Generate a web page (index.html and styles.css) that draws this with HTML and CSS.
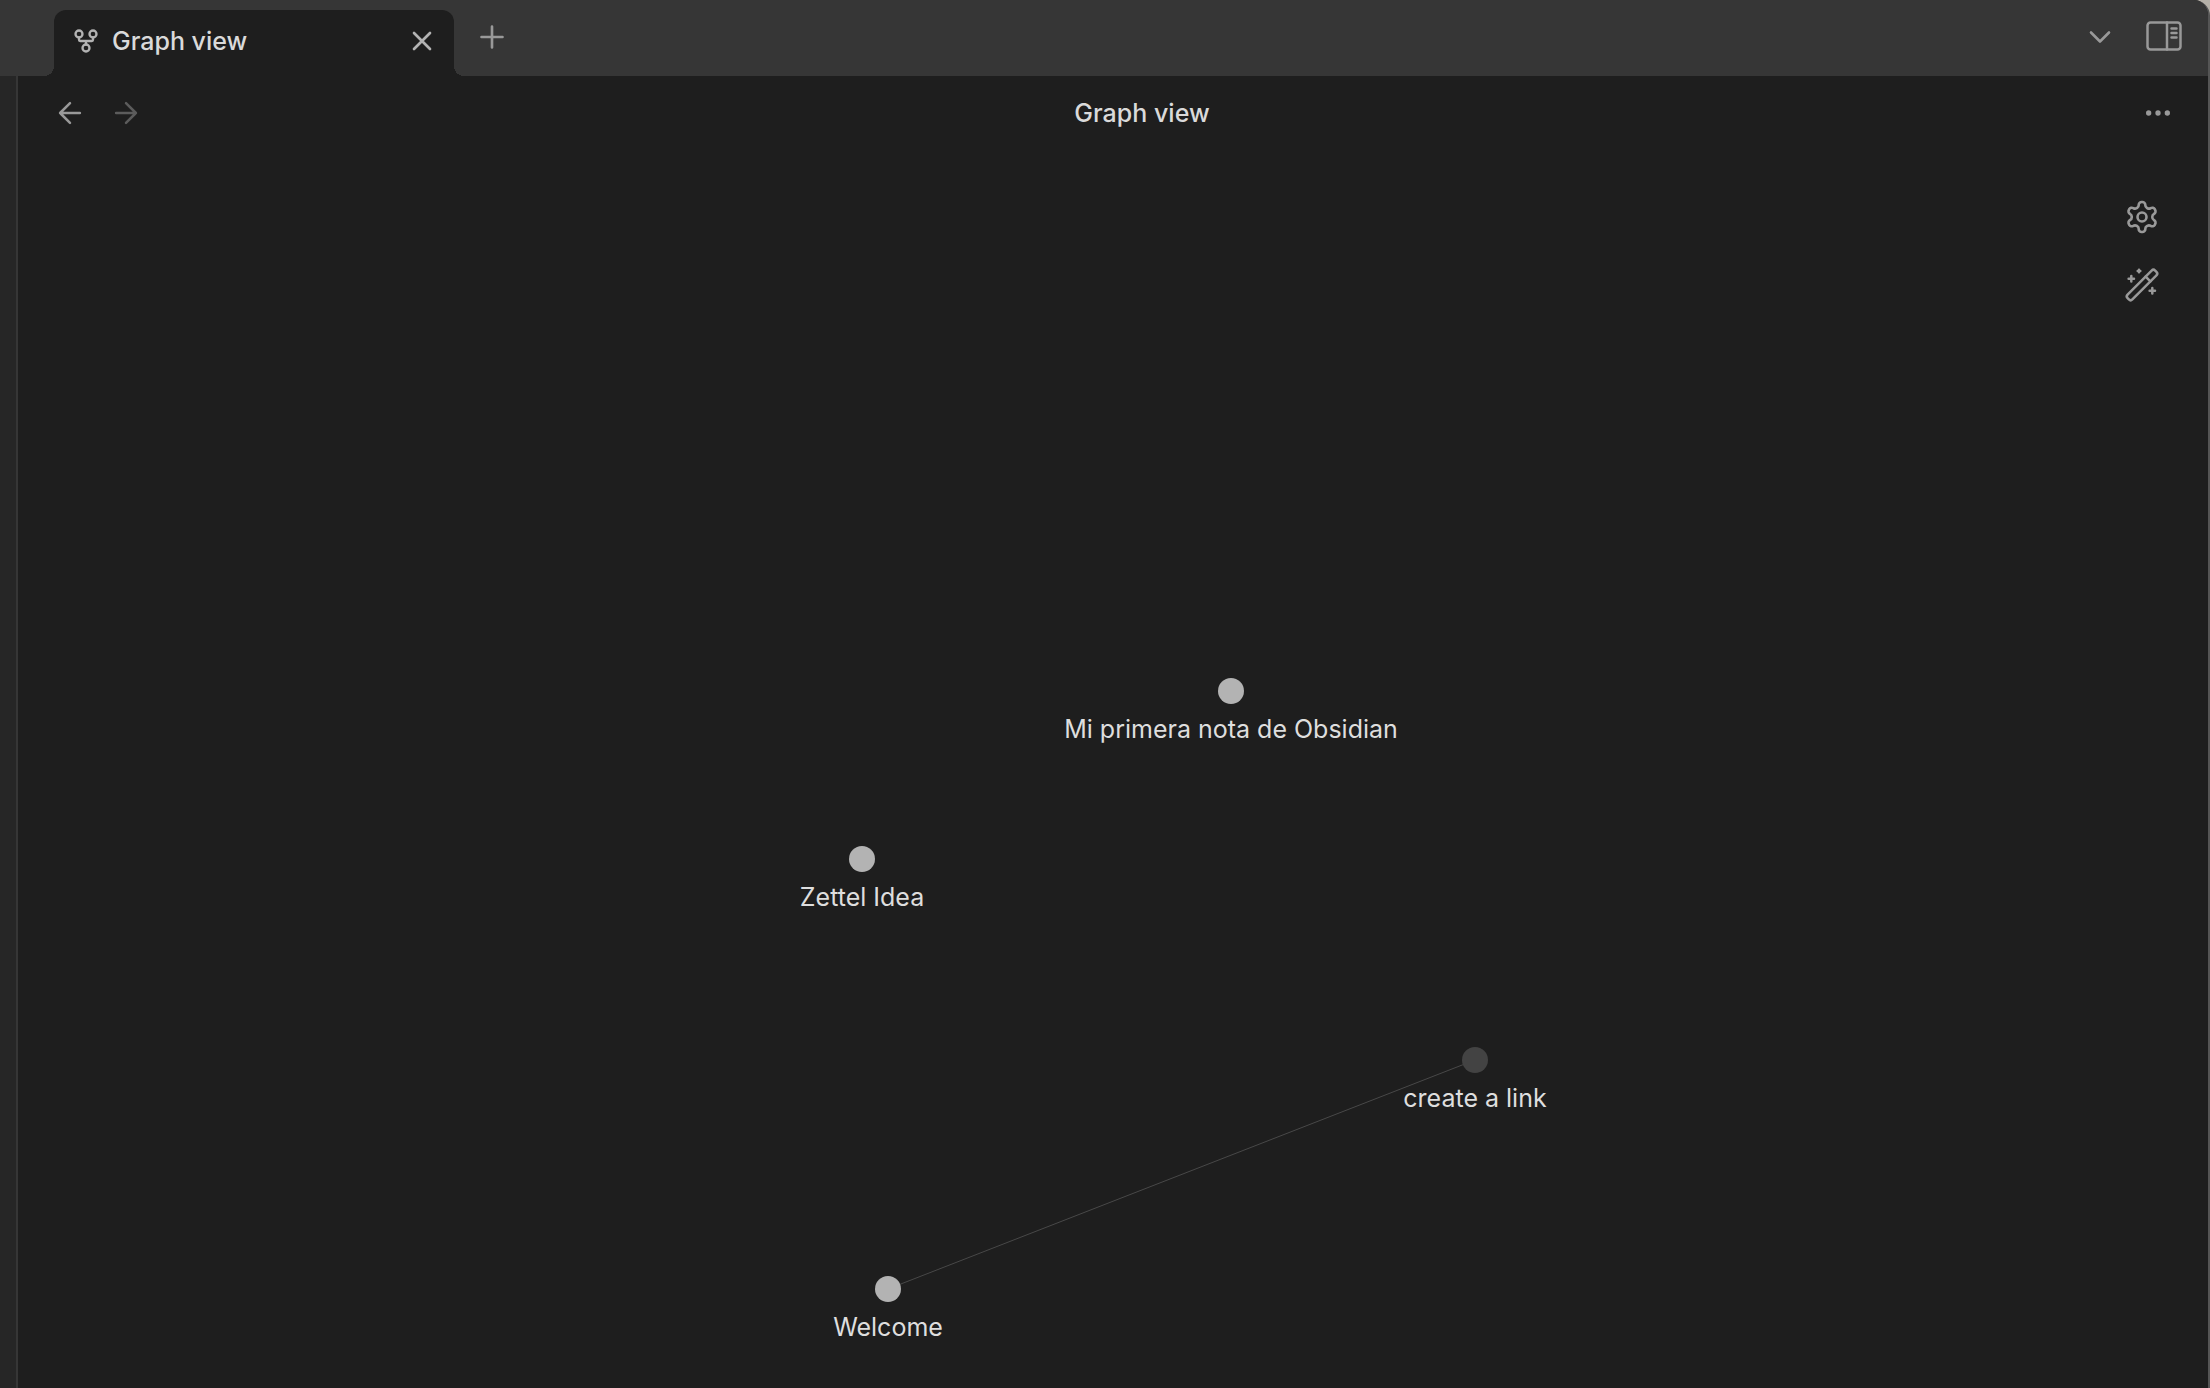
FILE: index.html
```html
<!DOCTYPE html>
<html lang="en">
<head>
<meta charset="utf-8">
<title>Graph view</title>
<link rel="stylesheet" href="styles.css">
</head>
<body>
<div class="window">
  <header class="tab-bar">
    <div class="tab">
      <svg class="tab-icon" viewBox="0 0 24 24" aria-hidden="true"><circle cx="12" cy="18" r="3"/><circle cx="6" cy="6" r="3"/><circle cx="18" cy="6" r="3"/><path d="M18 9v2c0 .6-.4 1-1 1H7c-.6 0-1-.4-1-1V9M12 12v3"/></svg>
      <span class="tab-title">Graph view</span>
      <button class="icon-button tab-close" type="button" aria-label="Close"><svg viewBox="0 0 24 24"><path d="M18 6 6 18M6 6l12 12"/></svg></button>
    </div>
    <button class="icon-button new-tab" type="button" aria-label="New tab"><svg viewBox="0 0 24 24"><path d="M5 12h14M12 5v14"/></svg></button>
    <div class="bar-actions">
      <button class="icon-button" type="button" aria-label="Tab list"><svg viewBox="0 0 24 24"><path d="m6 9 6 6 6-6"/></svg></button>
      <button class="icon-button" type="button" aria-label="Toggle right sidebar"><svg class="panel-icon" viewBox="0 0 36 32"><rect x="1.500" y="1.500" width="33" height="27" rx="3"/><path d="M21 1.500v27M25.500 7.500h5M25.500 12h5M25.500 16.500h5"/></svg></button>
    </div>
  </header>
  <div class="workspace">
    <div class="side-strip"></div>
    <main class="view">
      <div class="view-header">
        <nav class="history">
          <button class="icon-button" type="button" aria-label="Back"><svg viewBox="0 0 24 24"><path d="m12 19-7-7 7-7M19 12H5"/></svg></button>
          <button class="icon-button" type="button" aria-label="Forward" disabled><svg viewBox="0 0 24 24"><path d="M5 12h14M12 5l7 7-7 7"/></svg></button>
        </nav>
        <h1 class="view-title">Graph view</h1>
        <button class="icon-button more" type="button" aria-label="More options"><svg viewBox="0 0 24 24"><circle cx="5" cy="12" r="1"/><circle cx="12" cy="12" r="1"/><circle cx="19" cy="12" r="1"/></svg></button>
      </div>
      <div class="canvas">
        <svg class="graph" viewBox="0 0 2190 1238">
          <line class="edge" x1="870" y1="1139" x2="1457" y2="910"/>
          <g><circle class="node" cx="1213" cy="541" r="13"/><text class="label" x="1213" y="588">Mi primera nota de Obsidian</text></g>
          <g><circle class="node" cx="844" cy="709" r="13"/><text class="label" x="844" y="756">Zettel Idea</text></g>
          <g><circle class="node unresolved" cx="1457" cy="910" r="13"/><text class="label" x="1457" y="957">create a link</text></g>
          <g><circle class="node" cx="870" cy="1139" r="13"/><text class="label" x="870" y="1186">Welcome</text></g>
        </svg>
        <div class="graph-controls">
          <button class="icon-button" type="button" aria-label="Graph settings"><svg viewBox="0 0 24 24"><path d="M12.220 2h-.44a2 2 0 0 0-2 2v.18a2 2 0 0 1-1 1.730l-.43.25a2 2 0 0 1-2 0l-.15-.08a2 2 0 0 0-2.730.730l-.22.380a2 2 0 0 0 .730 2.730l.15.1a2 2 0 0 1 1 1.720v.51a2 2 0 0 1-1 1.740l-.15.090a2 2 0 0 0-.730 2.730l.22.380a2 2 0 0 0 2.730.730l.15-.08a2 2 0 0 1 2 0l.43.25a2 2 0 0 1 1 1.730V20a2 2 0 0 0 2 2h.44a2 2 0 0 0 2-2v-.18a2 2 0 0 1 1-1.730l.43-.25a2 2 0 0 1 2 0l.15.08a2 2 0 0 0 2.730-.730l.22-.390a2 2 0 0 0-.730-2.730l-.15-.08a2 2 0 0 1-1-1.740v-.5a2 2 0 0 1 1-1.740l.15-.09a2 2 0 0 0 .730-2.730l-.22-.380a2 2 0 0 0-2.730-.730l-.15.080a2 2 0 0 1-2 0l-.43-.25a2 2 0 0 1-1-1.730V4a2 2 0 0 0-2-2z"/><circle cx="12" cy="12" r="3"/></svg></button>
          <button class="icon-button" type="button" aria-label="Animate"><svg class="wand-icon" viewBox="0 0 36 36"><g transform="rotate(-45 18 18)"><rect x="-1.500" y="14.600" width="39" height="6.800" rx="2.500"/><path d="M26.500 14.600v6.800"/></g><path d="M7.300 9v5.400M4.600 11.700H10M28.300 21v5.400M25.600 23.700H31M15 2.700v2.600M13.700 4h2.600"/></svg></button>
        </div>
      </div>
    </main>
  </div>
</div>
</body>
</html>
```
FILE: styles.css
```css
* {
  box-sizing: border-box;
}

body {
  margin: 0;
  background: #b5b0a8;
  color: #dadada;
  font: 500 25px/32px Inter, "Liberation Sans", sans-serif;
}

.window {
  display: flex;
  flex-direction: column;
  min-height: 100vh;
  border-right: 2px solid #555;
  border-top-right-radius: 16px;
  background: #1e1e1e;
  overflow: hidden;
}

.tab-bar {
  display: flex;
  height: 76px;
  padding: 10px 18px 0 54px;
  background: #363636;
}

.tab {
  position: relative;
  display: flex;
  align-items: center;
  width: 400px;
  padding: 0 14px 4px 18px;
  border-radius: 12px 12px 0 0;
  background: #1e1e1e;
}

.tab::before,
.tab::after {
  content: "";
  position: absolute;
  bottom: 0;
  width: 10px;
  height: 10px;
}

.tab::before {
  right: 100%;
  background: radial-gradient(circle at 0 0, transparent 10px, #1e1e1e 10px);
}

.tab::after {
  left: 100%;
  background: radial-gradient(circle at 100% 0, transparent 10px, #1e1e1e 10px);
}

svg {
  flex: none;
  width: 36px;
  height: 36px;
  fill: none;
  stroke: currentColor;
  stroke-width: 1.75;
  stroke-linecap: round;
  stroke-linejoin: round;
}

.tab-icon {
  width: 28px;
  height: 28px;
  color: #b3b3b3;
  stroke-width: 2;
}

.tab-title {
  flex: 1;
  margin-left: 12px;
}

.icon-button {
  display: flex;
  align-items: center;
  justify-content: center;
  width: 52px;
  height: 52px;
  padding: 0;
  border: 0;
  background: none;
  color: #999;
}

.icon-button:disabled {
  color: #5c5c5c;
}

.tab-close {
  width: 36px;
  height: 36px;
  color: #b3b3b3;
}

.tab-close svg {
  width: 32px;
  height: 32px;
  stroke-width: 2;
}

.new-tab {
  height: 54px;
  margin-left: 12px;
}

.bar-actions {
  display: flex;
  gap: 12px;
  height: 54px;
  margin-left: auto;
  align-items: center;
}

.icon-button .panel-icon {
  height: 32px;
  stroke-width: 2.5;
}

.workspace {
  display: flex;
  flex: 1;
}

.side-strip {
  width: 18px;
  border-right: 2px solid #363636;
  background: #262626;
}

.view {
  display: flex;
  flex: 1;
  flex-direction: column;
  min-width: 0;
}

.view-header {
  display: flex;
  align-items: center;
  height: 74px;
  padding: 0 24px 0 26px;
}

.history {
  display: flex;
  gap: 4px;
}

.history svg {
  width: 34px;
  height: 34px;
}

.view-title {
  flex: 1;
  margin: 0;
  font: inherit;
  text-align: center;
}

.more svg {
  width: 32px;
  height: 32px;
  fill: currentColor;
  stroke-width: 2;
}

.canvas {
  position: relative;
  display: flex;
  flex: 1;
}

.graph {
  flex: 1;
  width: 100%;
  height: auto;
}

.edge {
  stroke: #484848;
  stroke-width: 1;
}

.node {
  fill: #b3b3b3;
  stroke: none;
}

.unresolved {
  fill: #434343;
}

.label {
  fill: #dedede;
  stroke: none;
  font-weight: 400;
  text-anchor: middle;
}

.graph-controls {
  position: absolute;
  top: 41px;
  right: 40px;
  display: flex;
  flex-direction: column;
  gap: 16px;
}

.wand-icon {
  stroke-width: 2.5;
}
```
